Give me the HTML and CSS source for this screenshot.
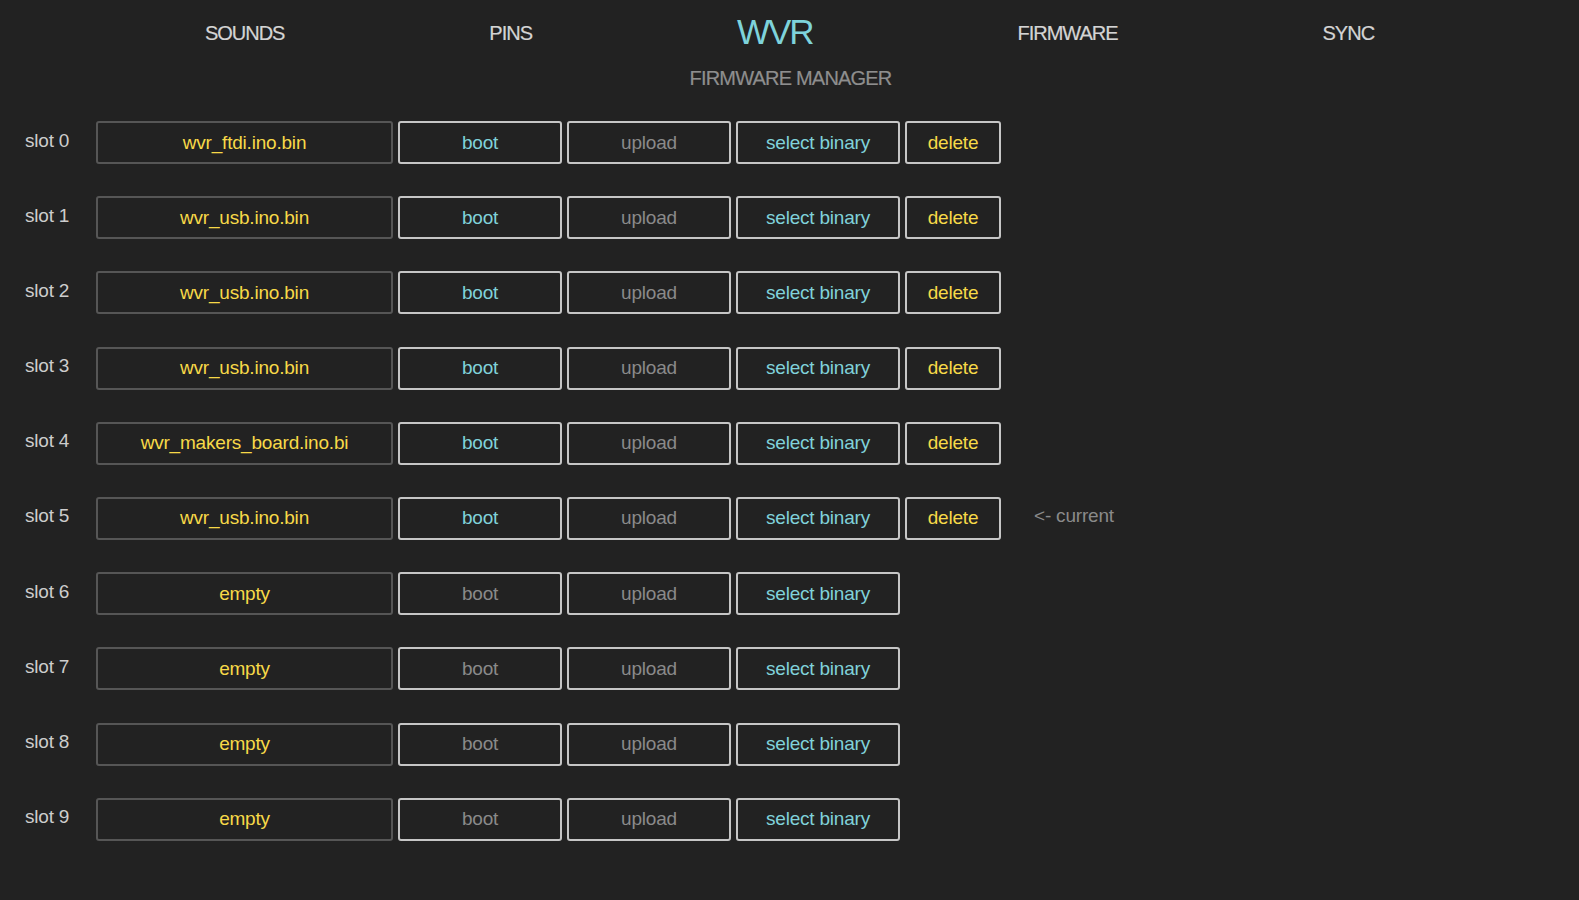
FILE: index.html
```html
<!DOCTYPE html>
<html lang="en">
<head>
<meta charset="utf-8">
<title>WVR - Firmware Manager</title>
<link rel="stylesheet" href="styles.css">
</head>
<body>
<header class="topbar">
  <nav class="nav">
    <a class="nav-item">SOUNDS</a>
    <a class="nav-item">PINS</a>
    <a class="nav-logo">WVR</a>
    <a class="nav-item">FIRMWARE</a>
    <a class="nav-item">SYNC</a>
  </nav>
  <div class="subtitle">FIRMWARE MANAGER</div>
</header>
<main class="slots">
  <div class="slot-row">
    <div class="slot-label">slot 0</div>
    <div class="file-box">wvr_ftdi.ino.bin</div>
    <div class="btn btn-teal">boot</div>
    <div class="btn btn-gray">upload</div>
    <div class="btn btn-teal">select binary</div>
    <div class="btn btn-del">delete</div>
  </div>
  <div class="slot-row">
    <div class="slot-label">slot 1</div>
    <div class="file-box">wvr_usb.ino.bin</div>
    <div class="btn btn-teal">boot</div>
    <div class="btn btn-gray">upload</div>
    <div class="btn btn-teal">select binary</div>
    <div class="btn btn-del">delete</div>
  </div>
  <div class="slot-row">
    <div class="slot-label">slot 2</div>
    <div class="file-box">wvr_usb.ino.bin</div>
    <div class="btn btn-teal">boot</div>
    <div class="btn btn-gray">upload</div>
    <div class="btn btn-teal">select binary</div>
    <div class="btn btn-del">delete</div>
  </div>
  <div class="slot-row">
    <div class="slot-label">slot 3</div>
    <div class="file-box">wvr_usb.ino.bin</div>
    <div class="btn btn-teal">boot</div>
    <div class="btn btn-gray">upload</div>
    <div class="btn btn-teal">select binary</div>
    <div class="btn btn-del">delete</div>
  </div>
  <div class="slot-row">
    <div class="slot-label">slot 4</div>
    <div class="file-box">wvr_makers_board.ino.bi</div>
    <div class="btn btn-teal">boot</div>
    <div class="btn btn-gray">upload</div>
    <div class="btn btn-teal">select binary</div>
    <div class="btn btn-del">delete</div>
  </div>
  <div class="slot-row">
    <div class="slot-label">slot 5</div>
    <div class="file-box">wvr_usb.ino.bin</div>
    <div class="btn btn-teal">boot</div>
    <div class="btn btn-gray">upload</div>
    <div class="btn btn-teal">select binary</div>
    <div class="btn btn-del">delete</div>
    <div class="current">&lt;- current</div>
  </div>
  <div class="slot-row">
    <div class="slot-label">slot 6</div>
    <div class="file-box">empty</div>
    <div class="btn btn-gray">boot</div>
    <div class="btn btn-gray">upload</div>
    <div class="btn btn-teal">select binary</div>
  </div>
  <div class="slot-row">
    <div class="slot-label">slot 7</div>
    <div class="file-box">empty</div>
    <div class="btn btn-gray">boot</div>
    <div class="btn btn-gray">upload</div>
    <div class="btn btn-teal">select binary</div>
  </div>
  <div class="slot-row">
    <div class="slot-label">slot 8</div>
    <div class="file-box">empty</div>
    <div class="btn btn-gray">boot</div>
    <div class="btn btn-gray">upload</div>
    <div class="btn btn-teal">select binary</div>
  </div>
  <div class="slot-row">
    <div class="slot-label">slot 9</div>
    <div class="file-box">empty</div>
    <div class="btn btn-gray">boot</div>
    <div class="btn btn-gray">upload</div>
    <div class="btn btn-teal">select binary</div>
  </div>
</main>
</body>
</html>
```

FILE: styles.css
```css
html, body {
  margin: 0;
  padding: 0;
  background: #222222;
}

body {
  font-family: "Liberation Sans", Arial, Helvetica, sans-serif;
  color: #cfcfcf;
  min-height: 900px;
}

.topbar {
  display: flex;
  flex-direction: column;
}

.nav {
  display: flex;
  justify-content: space-evenly;
  align-items: center;
  height: 66px;
}

.nav-item {
  font-size: 20px;
  letter-spacing: -1px;
  color: #d4d4d4;
  line-height: 24px;
  -webkit-text-stroke: 0.2px #d4d4d4;
}

.nav-logo {
  font-size: 35px;
  letter-spacing: -2px;
  color: #7ed3db;
  line-height: 40px;
  margin-top: -2px;
}

.subtitle {
  text-align: center;
  font-size: 20px;
  letter-spacing: -0.8px;
  line-height: 24px;
  color: #8e8e8e;
  padding-left: 2px;
  -webkit-text-stroke: 0.2px #8e8e8e;
}

.slots {
  display: flex;
  flex-direction: column;
  gap: 32.2px;
  margin-top: 31px;
  padding-left: 25px;
}

.slot-row {
  display: flex;
  align-items: center;
  height: 43px;
  gap: 5px;
  font-size: 19px;
  letter-spacing: -0.2px;
}

.slot-label {
  width: 66px;
  color: #cdcdcd;
  line-height: 22px;
  margin-bottom: 4px;
}

.file-box,
.btn {
  box-sizing: border-box;
  height: 43px;
  display: flex;
  align-items: center;
  justify-content: center;
  border-radius: 3px;
  white-space: nowrap;
  overflow: hidden;
}

.file-box {
  width: 297px;
  border: 2px solid #565656;
  color: #f7d948;
}

.btn {
  width: 164px;
  border: 2px solid #c6c6c6;
}

.btn-teal {
  color: #80d2da;
}

.btn-gray {
  color: #8a8a8a;
}

.btn-del {
  width: 96px;
  color: #f7d948;
}

.current {
  margin-left: 28px;
  color: #8a8a8a;
  line-height: 22px;
  margin-bottom: 4px;
}
```
